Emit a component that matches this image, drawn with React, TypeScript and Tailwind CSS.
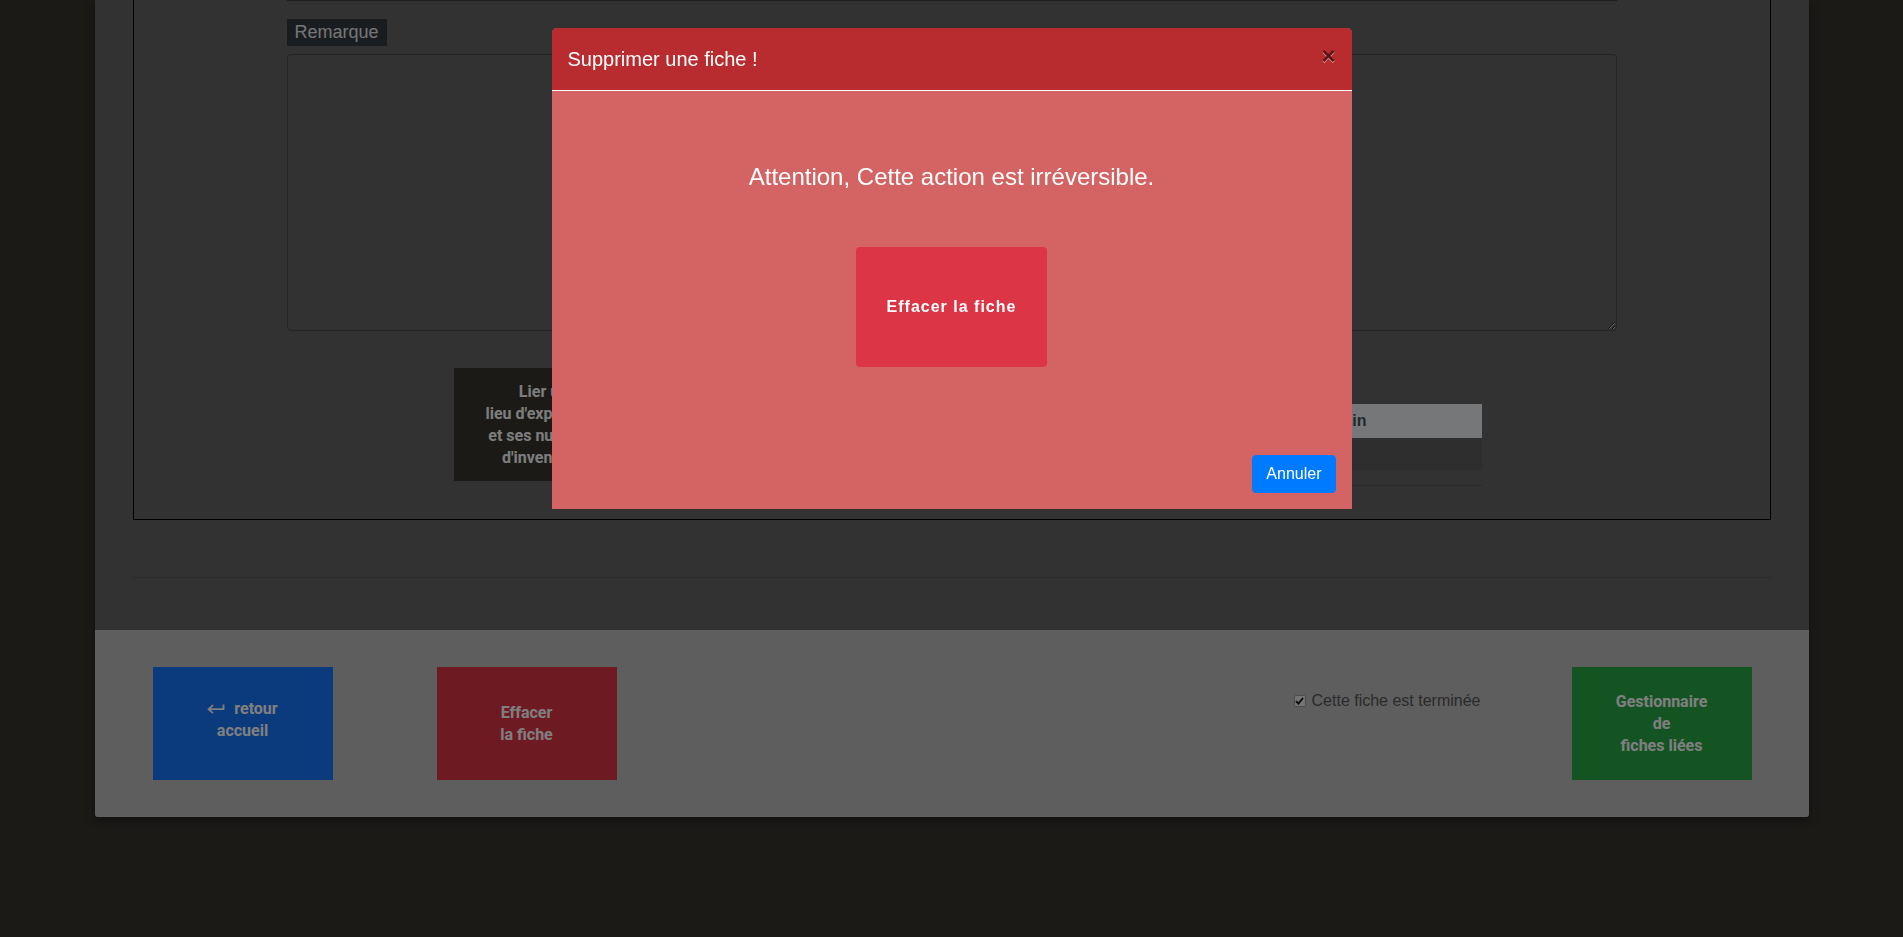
import React from 'react';

/**
 * Fiche — bas de page d'édition, avec la modale de suppression ouverte.
 */

const tile =
  "flex w-[180px] h-[113px] shrink-0 flex-col items-center justify-center text-center font-['Roboto',sans-serif] text-[16px] font-bold leading-[22px] text-white";

function ReturnArrow() {
  return (
    <svg width="18" height="10" viewBox="0 0 18 10" fill="none" className="mr-[9px] inline-block" aria-hidden>
      <path d="M16.5 0.5V5.2H2" stroke="currentColor" strokeWidth="1.8" />
      <path d="M6 1.2L1.6 5.2L6 9.2" stroke="currentColor" strokeWidth="1.8" />
    </svg>
  );
}

function DeleteModal() {
  return (
    <>
      {/* Fond assombri */}
      <div className="fixed inset-0 bg-black/50" />

      <div className="fixed left-1/2 top-[28px] w-[800px] -translate-x-1/2 font-['Liberation_Sans',Arial,sans-serif]">
        <div className="overflow-hidden rounded-t-[5px] bg-[#d36463]">
          {/* En-tête */}
          <div className="flex items-start justify-between border-b border-white bg-[#b82c30] p-4">
            <h5 className="text-[20px] leading-[30px] text-white">Supprimer une fiche !</h5>
            <button
              type="button"
              className="text-[24px] font-bold leading-none text-black opacity-50 [text-shadow:0_1px_0_#fff]"
            >
              ×
            </button>
          </div>

          {/* Corps */}
          <div className="flex flex-col items-center pt-[68px] pb-[72px]">
            <p className="text-[24px] leading-[36px] text-white">Attention, Cette action est irréversible.</p>
            <button
              type="button"
              className="mt-[52px] flex h-[120px] w-[191px] items-center justify-center rounded-[4px] bg-[#dc3545] text-[16px] font-bold tracking-[1px] text-white"
            >
              Effacer la fiche
            </button>
          </div>

          {/* Pied */}
          <div className="flex justify-end p-4">
            <button
              type="button"
              className="rounded-[4px] border border-[#007bff] bg-[#007bff] px-[13px] py-[6px] text-[16px] leading-6 text-white"
            >
              Annuler
            </button>
          </div>
        </div>
      </div>
    </>
  );
}

export default function App() {
  return (
    <div className="min-h-screen bg-[#36342f] font-['Liberation_Sans',Arial,sans-serif]">
      <div className="mx-auto w-[1714px] rounded-b-[3px] bg-[#646464] shadow-[0_4px_10px_rgba(0,0,0,0.35)]">
        {/* Cadre de la fiche */}
        <div className="mx-[38px] border-x border-b border-black pb-[38px]">
          <div className="px-[153px]">
            <div className="border-t border-[#3c3c3c]" />
            <div className="mt-[18px] w-fit bg-[#343a40] px-2 text-[18px] leading-[27px] text-[#eaeaea]">
              Remarque
            </div>
            <textarea
              readOnly
              className="mt-2 block h-[277px] w-full rounded-[4px] border border-[#4a4a4a] bg-transparent"
            />
          </div>

          <div className="mt-[37px] flex h-[113px] items-start pl-[320px]">
            <button type="button" className={`${tile} bg-[#36342f] !text-[#fafafa]`}>
              Lier un
              <br />
              lieu d'exposition
              <br />
              et ses numéros
              <br />
              d'inventaire
            </button>

            <div className="ml-[87px] mt-[36px] w-[761px]">
              <table className="w-full border-collapse">
                <thead>
                  <tr className="bg-[#eceef3] text-left text-[16px] font-bold leading-6 text-[#495057]">
                    <th className="w-[570px] px-3 py-[5px]">Numéro d'inventaire</th>
                    <th className="px-3 py-[5px]">Magasin</th>
                  </tr>
                </thead>
                <tbody>
                  <tr className="h-[32px] bg-black/[0.07]">
                    <td />
                    <td />
                  </tr>
                </tbody>
              </table>
              <div className="h-4 border-b border-black/15" />
            </div>
          </div>
        </div>

        <div className="mx-[37px] mt-[57px] border-t border-black/10" />

        {/* Barre d'actions */}
        <div className="mt-[52px] flex items-start rounded-b-[3px] bg-[#bcbcbc] py-[37px] pl-[58px] pr-[57px]">
          <button type="button" className={`${tile} bg-[#1677f9] pb-2`}>
            <span className="flex items-center">
              <ReturnArrow />
              retour
            </span>
            accueil
          </button>

          <button type="button" className={`${tile} ml-[104px] bg-[#dc3545]`}>
            Effacer
            <br />
            la fiche
          </button>

          <label className="ml-auto mr-[91px] mt-[22px] flex items-center text-[16px] leading-6 text-[#555]">
            <span className="mr-[6px] flex h-[12px] w-[12px] items-center justify-center rounded-[2px] border border-[#9a9a9a] bg-[#e8e8e8]">
              <svg width="9" height="8" viewBox="0 0 9 8" aria-hidden>
                <path d="M1 4.2L3.4 6.6L8 1" stroke="#111" strokeWidth="1.8" fill="none" />
              </svg>
            </span>
            Cette fiche est terminée
          </label>

          <button type="button" className={`${tile} bg-[#28a745]`}>
            Gestionnaire
            <br />
            de
            <br />
            fiches liées
          </button>
        </div>
      </div>

      <DeleteModal />
    </div>
  );
}
